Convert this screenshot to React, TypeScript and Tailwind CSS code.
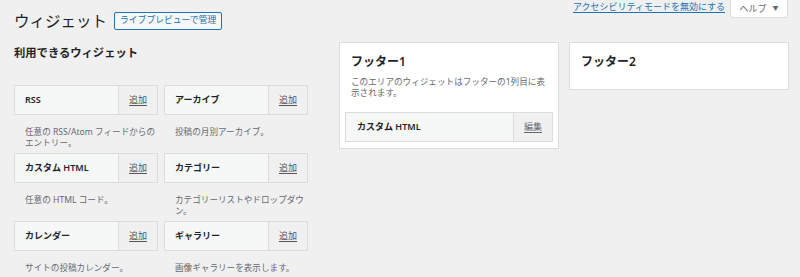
import React from 'react';

interface Widget {
  title: string;
  description: string[];
}

const WIDGETS: Widget[] = [
  { title: 'RSS', description: ['任意の RSS/Atom フィードからの', 'エントリー。'] },
  { title: 'アーカイブ', description: ['投稿の月別アーカイブ。'] },
  { title: 'カスタム HTML', description: ['任意の HTML コード。'] },
  { title: 'カテゴリー', description: ['カテゴリーリストやドロップダウ', 'ン。'] },
  { title: 'カレンダー', description: ['サイトの投稿カレンダー。'] },
  { title: 'ギャラリー', description: ['画像ギャラリーを表示します。'] },
];

const FONT = '[font-family:"Noto_Sans","Noto_Sans_CJK_JP",sans-serif]';

function WidgetCard({ title, action }: { title: string; action: string }) {
  return (
    <div className="flex h-[30px] border border-[#dcdcde] bg-[#f6f7f7]">
      <div className="flex flex-1 items-center pl-[10px] text-[9px] font-semibold whitespace-nowrap text-[#1d2327]">
        {title}
      </div>
      <div className="flex w-[39px] items-center justify-center border-l border-[#dcdcde] bg-[#f0f0f1]">
        <span className="text-[9px] text-[#50575e] underline underline-offset-2">{action}</span>
      </div>
    </div>
  );
}

function Sidebar({
  title,
  description,
  children,
}: {
  title: string;
  description?: string[];
  children?: React.ReactNode;
}) {
  return (
    <div className="w-[220px] self-start border border-[#dcdcde] bg-white px-[5px] pb-[6px]">
      <h2 className="pl-[6px] pt-[11px] pb-[13px] text-[12px] leading-[16px] font-semibold text-[#1d2327]">
        {title}
      </h2>
      {description && (
        <p className="-mt-[6px] pl-[6px] pb-[13px] text-[8.6px] leading-[11px] text-[#646970]">
          {description.map((line) => (
            <span key={line} className="block whitespace-nowrap">
              {line}
            </span>
          ))}
        </p>
      )}
      {children}
    </div>
  );
}

export default function App() {
  return (
    <div className={`relative h-[277px] w-[800px] overflow-hidden bg-[#f0f0f1] ${FONT}`}>
      <div className="flex items-start justify-between pl-[14px] pr-[12px]">
        <div className="flex items-center gap-[7px] pt-[11px]">
          <h1 className="text-[15.5px] leading-[20px] text-[#1d2327]">ウィジェット</h1>
          <span className="flex h-[18px] items-center rounded-[2px] border border-[#2271b1] bg-[#f6f7f7] px-[5px] text-[8.8px] text-[#2271b1]">
            ライブプレビューで管理
          </span>
        </div>
        <div className="flex items-start gap-[5px]">
          <a className="pt-[1px] text-[9px] leading-[12px] text-[#2271b1] underline underline-offset-2">
            アクセシビリティモードを無効にする
          </a>
          <div className="-mt-px flex h-[19px] w-[58px] items-center justify-center gap-[6px] rounded-b-[3px] border border-[#dcdcde] bg-white text-[9px] text-[#646970]">
            <span>ヘルプ</span>
            <span className="text-[6px]">▼</span>
          </div>
        </div>
      </div>

      <div className="mt-[11px] flex items-start pl-[14px]">
        <div className="w-[294px]">
          <h2 className="pt-[3px] text-[11.3px] leading-[16px] font-bold text-[#1d2327]">
            利用できるウィジェット
          </h2>
          <div className="mt-[24px] grid grid-cols-2 gap-x-[6px]">
            {WIDGETS.map((w) => (
              <div key={w.title}>
                <WidgetCard title={w.title} action="追加" />
                <p className="pl-[11px] pt-[12px] pb-[4px] text-[8.6px] leading-[11px] text-[#646970]">
                  {w.description.map((line) => (
                    <span key={line} className="block whitespace-nowrap">
                      {line}
                    </span>
                  ))}
                </p>
              </div>
            ))}
          </div>
        </div>

        <div className="ml-[31px] flex gap-[10px]">
          <Sidebar
            title="フッター1"
            description={['このエリアのウィジェットはフッターの1列目に表', '示されます。']}
          >
            <div className="flex h-[30px] border border-[#dcdcde] bg-[#f6f7f7]">
              <div className="flex flex-1 items-center pl-[11px] text-[9px] font-semibold text-[#1d2327]">
                カスタム HTML
              </div>
              <div className="flex w-[39px] items-center justify-center border-l border-[#dcdcde] bg-[#f0f0f1]">
                <span className="text-[9px] text-[#646970] underline underline-offset-2">編集</span>
              </div>
            </div>
          </Sidebar>
          <Sidebar title="フッター2" />
        </div>
      </div>
    </div>
  );
}
